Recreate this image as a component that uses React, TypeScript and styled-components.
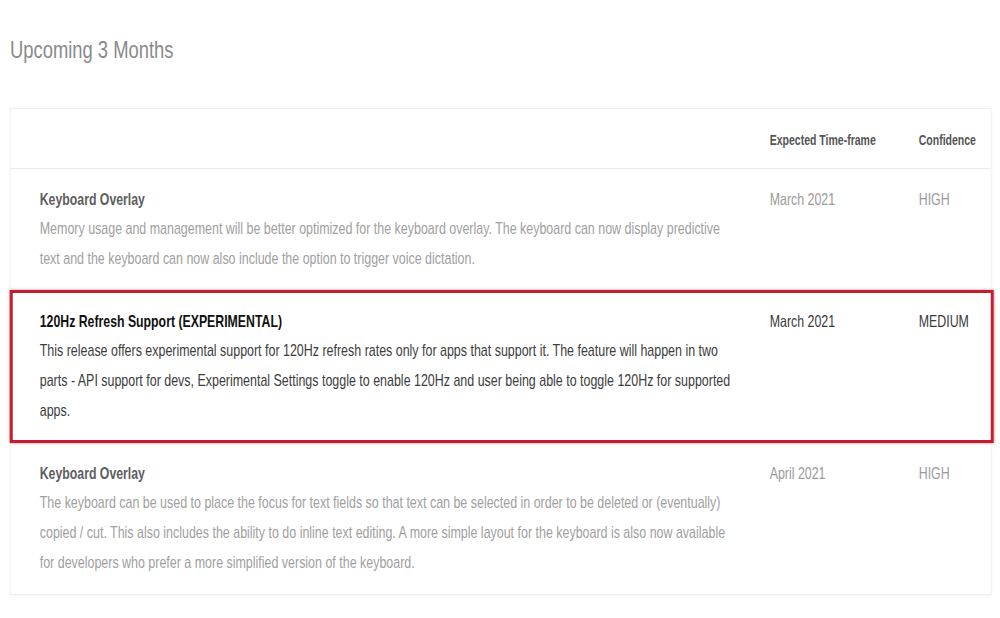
import React, { FC } from 'react';
import styled, { createGlobalStyle } from 'styled-components';

// the source screenshot is horizontally squeezed, so the whole sheet is
// laid out wide and squeezed back with scaleX
const SQUEEZE = 0.75;
const px = (n: number) => `${n / SQUEEZE}px`;

const GlobalStyle = createGlobalStyle`
  html, body {
    margin: 0;
    padding: 0;
    background: #ffffff;
    overflow: hidden;
  }
  body {
    font-family: "Liberation Sans", Arial, sans-serif;
    color: #333;
  }
`;

const Viewport = styled.div`
  width: 1000px;
  height: 618px;
  overflow: hidden;
`;

const Page = styled.div`
  width: ${px(1000)};
  padding: 30px ${px(10)} 0;
  box-sizing: border-box;
  transform: scaleX(${SQUEEZE});
  transform-origin: 0 0;
`;

const Title = styled.h2`
  margin: 0 0 38px 0;
  font-size: 24.5px;
  font-weight: 400;
  line-height: 40px;
  color: #8a8a8a;
`;

const Card = styled.div`
  width: ${px(980)};
  border: 1px solid #eeeeee;
  box-shadow: 0 1px 4px rgba(0, 0, 0, 0.05);
  background: #fff;
`;

const Grid = styled.div`
  display: grid;
  grid-template-columns: ${px(730)} ${px(149)} 1fr;
  padding-left: ${px(29)};
`;

const HeaderRow = styled(Grid)`
  height: 60px;
  padding-top: 23px;
  box-sizing: border-box;
  border-bottom: 1px solid #ebebeb;
`;

const HeadCell = styled.div`
  font-size: 14px;
  font-weight: 700;
  color: #555;
  line-height: 16px;
`;

const Row = styled(Grid)<{ $active?: boolean }>`
  padding-top: ${(p) => (p.$active ? 13 : 15)}px;
  padding-bottom: ${(p) => (p.$active ? 14 : 16)}px;
  border: 0 solid ${(p) => (p.$active ? '#c41e2e' : 'transparent')};
  border-width: ${(p) => (p.$active ? '3px 4px' : '0')};
  margin-left: ${(p) => (p.$active ? px(-1) : '0')};
  margin-right: ${(p) => (p.$active ? px(-3) : '0')};
  padding-left: ${(p) => (p.$active ? `${29 / SQUEEZE - 4 + 1 / SQUEEZE}px` : px(29))};
  box-shadow: ${(p) => (p.$active ? '0 0 3px rgba(196, 30, 46, 0.55)' : 'none')};
  color: ${(p) => (p.$active ? '#3c3c3c' : '#a0a0a0')};
`;

const Main = styled.div`
  padding-right: ${px(28)};
`;

const ItemTitle = styled.div<{ $active?: boolean }>`
  font-size: 16.4px;
  font-weight: 700;
  line-height: 30px;
  color: ${(p) => (p.$active ? '#111' : '#5e5e5e')};
`;

const Desc = styled.div`
  font-size: 16.6px;
  line-height: 30px;
`;

const Cell = styled.div<{ $active?: boolean }>`
  font-size: 16.5px;
  line-height: 30px;
  color: ${(p) => (p.$active ? '#3a3a3a' : '#9a9a9a')};
`;

type Item = {
  title: string;
  desc: string;
  date: string;
  confidence: string;
  active?: boolean;
};

const items: Item[] = [
  {
    title: 'Keyboard Overlay',
    desc: 'Memory usage and management will be better optimized for the keyboard overlay. The keyboard can now display predictive text and the keyboard can now also include the option to trigger voice dictation.',
    date: 'March 2021',
    confidence: 'HIGH',
  },
  {
    title: '120Hz Refresh Support (EXPERIMENTAL)',
    desc: 'This release offers experimental support for 120Hz refresh rates only for apps that support it. The feature will happen in two parts - API support for devs, Experimental Settings toggle to enable 120Hz and user being able to toggle 120Hz for supported apps.',
    date: 'March 2021',
    confidence: 'MEDIUM',
    active: true,
  },
  {
    title: 'Keyboard Overlay',
    desc: 'The keyboard can be used to place the focus for text fields so that text can be selected in order to be deleted or (eventually) copied / cut. This also includes the ability to do inline text editing. A more simple layout for the keyboard is also now available for developers who prefer a more simplified version of the keyboard.',
    date: 'April 2021',
    confidence: 'HIGH',
  },
];

const App: FC = function App() {
  return (
    <Viewport>
      <GlobalStyle />
      <Page>
        <Title>Upcoming 3 Months</Title>
        <Card>
          <HeaderRow>
            <div />
            <HeadCell>Expected Time-frame</HeadCell>
            <HeadCell>Confidence</HeadCell>
          </HeaderRow>
          {items.map((item, i) => (
            <Row key={i} $active={item.active}>
              <Main>
                <ItemTitle $active={item.active}>{item.title}</ItemTitle>
                <Desc>{item.desc}</Desc>
              </Main>
              <Cell $active={item.active}>{item.date}</Cell>
              <Cell $active={item.active}>{item.confidence}</Cell>
            </Row>
          ))}
        </Card>
      </Page>
    </Viewport>
  );
};

export default App;
